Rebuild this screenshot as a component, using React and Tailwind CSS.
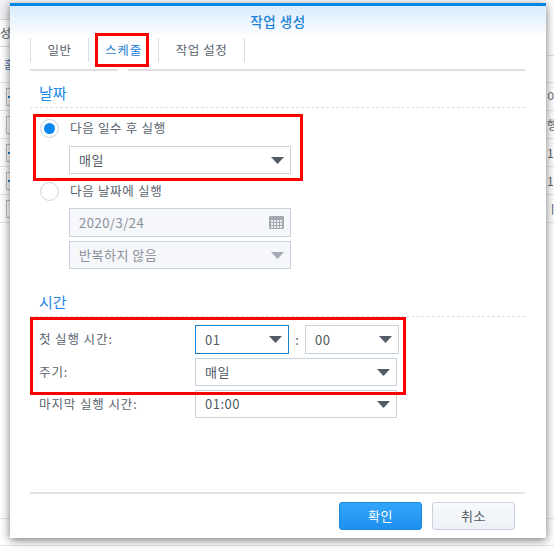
const font = { fontFamily: '"Noto Sans CJK KR", "Liberation Sans", sans-serif' };

function Caret({ muted }) {
  return (
    <svg width="13" height="7" viewBox="0 0 13 7" className="shrink-0">
      <path d="M0 0H13L6.5 7Z" fill={muted ? "#a3aab3" : "#535b66"} />
    </svg>
  );
}

function CalendarIcon() {
  const cells = [];
  for (const y of [4, 7, 10]) {
    for (const x of [2, 5, 8, 11]) {
      cells.push(<rect key={`${x}-${y}`} x={x} y={y} width="2" height="2" fill="#eceef0" />);
    }
  }
  return (
    <svg width="15" height="13" viewBox="0 0 15 13" className="shrink-0">
      <rect width="15" height="13" rx="1" fill="#a4aab1" />
      {cells}
    </svg>
  );
}

function Field({ value, className, disabled, focused, icon }) {
  return (
    <div
      className={`flex items-center justify-between pl-[9px] pr-[6px] border text-[13px] tracking-[0.5px] ${
        focused ? "border-[#1a82cf]" : "border-[#c8d2de]"
      } ${disabled ? "bg-[#f5f7fa] text-[#8a9099]" : "bg-white text-[#505a64]"} ${className}`}
    >
      <span>{value}</span>
      {icon || <Caret muted={disabled} />}
    </div>
  );
}

function Radio({ checked, label }) {
  return (
    <div className="flex items-center h-[20px] gap-[11px]">
      <div className="w-[19px] h-[19px] rounded-full border border-[#ccd5e0] bg-white flex items-center justify-center">
        {checked && <div className="w-[11px] h-[11px] rounded-full bg-[#0a86f0]" />}
      </div>
      <span className="text-[12.5px] tracking-[0.7px] text-[#59636d]">{label}</span>
    </div>
  );
}

function Heading({ children }) {
  return (
    <div className="h-[26px] pl-[9px] border-b border-dashed border-[#d9e0e8] text-[15px] leading-[22px] text-[#1b86e6]">
      {children}
    </div>
  );
}

function TimeRow({ label, children, className }) {
  return (
    <div className={`flex items-center ${className}`}>
      <span className="w-[165px] pl-[9px] text-[12.5px] tracking-[0.9px] text-[#59636d]">{label}</span>
      {children}
    </div>
  );
}

// row of the list that sits behind the dialog, only its ends stay visible
function BackRow({ children }) {
  return <div className="h-[28px] border-b border-[#dfe5ec] flex items-center overflow-hidden">{children}</div>;
}

function RowBox({ plus }) {
  return (
    <div className="ml-[6px] w-[6px] h-[18px] shrink-0 border-l border-y border-[#b9bfc6] flex items-center pl-[1px]">
      {plus && <div className="w-[2px] h-[2px] bg-[#1b7fd6]" />}
    </div>
  );
}

function EdgeText({ children }) {
  return <span className="ml-[1px] text-[12px] whitespace-nowrap text-[#59636d]">{children}</span>;
}

export default function App() {
  return (
    <div className="relative w-[554px] h-[551px] overflow-hidden bg-white" style={font}>
      {/* page behind the dialog */}
      <div className="flex justify-between h-[224px]">
        <div className="w-[12px] flex flex-col">
          <div className="h-[20px] bg-[#eef0f3] border-b border-[#d5dae0]" />
          <div className="h-[27px] border-b border-[#d5dae0] flex items-center overflow-hidden">
            <span className="text-[12px] text-[#59636d]">성</span>
          </div>
          <div className="h-[36px] border-b border-[#dfe5ec] flex items-center overflow-hidden">
            <span className="ml-[4px] text-[11px] text-[#3f6fa8]">홈</span>
          </div>
          <BackRow><RowBox plus /></BackRow>
          <BackRow><RowBox /></BackRow>
          <BackRow><RowBox plus /></BackRow>
          <BackRow><RowBox plus /></BackRow>
          <BackRow><RowBox /></BackRow>
        </div>
        <div className="w-[8px] flex flex-col">
          <div className="h-[56px] border-b border-[#dfe5ec]" />
          <div className="h-[27px] border-b border-[#dfe5ec]" />
          <BackRow><EdgeText>이</EdgeText></BackRow>
          <BackRow><EdgeText>행</EdgeText></BackRow>
          <BackRow><EdgeText>10</EdgeText></BackRow>
          <BackRow><EdgeText>10</EdgeText></BackRow>
          <BackRow><EdgeText>ㅣ</EdgeText></BackRow>
        </div>
      </div>
      <div className="mt-[294px] h-[28px] border-y border-[#dfe5ec]" />

      {/* dialog */}
      <div className="absolute left-[10px] top-[3px] w-[536px] h-[535px] flex flex-col bg-white border-t-[3px] border-[#0086e5] shadow-[0_2px_9px_rgba(0,0,0,0.55)]">
        <div className="h-[32px] pb-[2px] shrink-0 flex items-center justify-center text-[13.5px] tracking-[0.6px] font-medium text-[#1b7fd6] bg-gradient-to-b from-[#d9ecfc] to-white">
          작업 생성
        </div>

        <div className="ml-[20px] mr-[21px] h-[33px] shrink-0 flex items-start border-b-2 border-[#dedede]">
          <div className="h-[24px] w-[59px] pt-[1px] flex items-center justify-center border-x border-[#d5dde6] text-[12.5px] tracking-[0.5px] text-[#59636d]">
            일반
          </div>
          <div className="relative h-[24px] w-[70px] pt-[1px] flex items-center justify-center border-r border-[#d5dde6] text-[12.5px] tracking-[0.8px] text-[#1b7fd6]">
            스케줄
            <svg width="12" height="6" viewBox="0 0 12 6" className="absolute left-[28px] top-[27px]">
              <path d="M0 6L4 2H8L12 6Z" fill="#fff" />
            </svg>
          </div>
          <div className="h-[24px] w-[86px] pt-[1px] flex items-center justify-center border-r border-[#d5dde6] text-[12.5px] tracking-[0.5px] text-[#59636d]">
            작업 설정
          </div>
        </div>

        <div className="ml-[20px] mr-[21px] flex flex-col flex-1">
          <div className="mt-[11px]">
            <Heading>날짜</Heading>
          </div>
          <div className="mt-[10px] pl-[10px]">
            <Radio checked label="다음 일수 후 실행" />
            <Field value="매일" className="mt-[8px] ml-[29px] w-[222px] h-[28px]" />
            <div className="mt-[7px]">
              <Radio label="다음 날짜에 실행" />
            </div>
            <Field
              value="2020/3/24"
              disabled
              icon={<CalendarIcon />}
              className="mt-[7px] ml-[29px] w-[222px] h-[29px]"
            />
            <Field value="반복하지 않음" disabled className="mt-[4px] ml-[29px] w-[222px] h-[28px]" />
          </div>

          <div className="mt-[22px]">
            <Heading>시간</Heading>
          </div>
          <TimeRow label="첫 실행 시간:" className="mt-[8px]">
            <Field value="01" focused className="w-[94px] h-[29px]" />
            <span className="w-[16px] text-center text-[13px] text-[#59636d]">:</span>
            <Field value="00" className="w-[94px] h-[29px]" />
          </TimeRow>
          <TimeRow label="주기:" className="mt-[4px]">
            <Field value="매일" className="w-[202px] h-[28px]" />
          </TimeRow>
          <TimeRow label="마지막 실행 시간:" className="mt-[4px]">
            <Field value="01:00" className="w-[202px] h-[28px]" />
          </TimeRow>

          <div className="mt-auto mb-[8px] h-[2px] bg-[#e2e2e2]" />
          <div className="mb-[8px] pr-[10px] flex justify-end gap-[10px]">
            <button className="w-[83px] h-[28px] rounded-[3px] border border-[#1c86d8] bg-gradient-to-b from-[#32a5fb] to-[#1e90ee] text-[13px] tracking-[0.5px] text-white">
              확인
            </button>
            <button className="w-[83px] h-[28px] rounded-[3px] border border-[#c8d2de] bg-gradient-to-b from-[#f8fafc] to-[#edf1f6] text-[13px] tracking-[0.5px] text-[#505a64]">
              취소
            </button>
          </div>
        </div>
      </div>

      {/* red annotation boxes */}
      <div className="absolute left-[95px] top-[33px] w-[54px] h-[34px] border-[3px] border-[#ff0000]" />
      <div className="absolute left-[33px] top-[114px] w-[270px] h-[67px] border-[3px] border-[#ff0000]" />
      <div className="absolute left-[30px] top-[317px] w-[376px] h-[78px] border-[3px] border-[#ff0000]" />
    </div>
  );
}
